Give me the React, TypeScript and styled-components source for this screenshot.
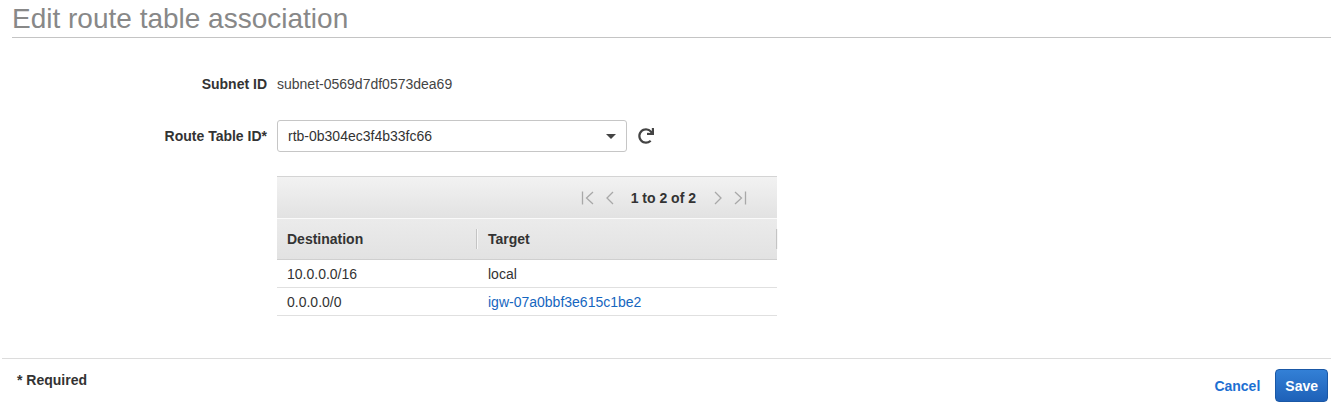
import styled, { createGlobalStyle } from 'styled-components'
import { FaRedo } from 'react-icons/fa'

const GlobalStyle = createGlobalStyle`
  body {
    margin: 0;
    font-family: "Liberation Sans", Arial, sans-serif;
    font-size: 14px;
    color: #444;
    background: #fff;
  }
`

const routes = [
  { destination: '10.0.0.0/16', target: 'local', link: false },
  { destination: '0.0.0.0/0', target: 'igw-07a0bbf3e615c1be2', link: true },
]

function PagerIcon({ kind }: { kind: 'first' | 'prev' | 'next' | 'last' }) {
  const flip = kind === 'next' || kind === 'last'
  const bar = kind === 'first' || kind === 'last'
  return (
    <svg width={bar ? 14 : 10} height="16" viewBox={bar ? '0 0 14 16' : '0 0 10 16'}>
      <g
        transform={flip ? `translate(${bar ? 14 : 10},0) scale(-1,1)` : undefined}
        fill="none"
        stroke="#a8a8a8"
        strokeWidth="1.3"
      >
        {bar && <line x1="1.5" y1="1.5" x2="1.5" y2="14.5" />}
        <polyline points={bar ? '12,2 5.5,8 12,14' : '8,2 2,8 8,14'} />
      </g>
    </svg>
  )
}

function App() {
  return (
    <>
      <GlobalStyle />
      <Page>
        <Title>Edit route table association</Title>
        <Form>
          <Label>Subnet ID</Label>
          <Value>subnet-0569d7df0573dea69</Value>

          <Label>Route Table ID*</Label>
          <SelectRow>
            <Select>
              <span>rtb-0b304ec3f4b33fc66</span>
              <Caret />
            </Select>
            <RefreshButton aria-label="Refresh">
              <FaRedo size={16} />
            </RefreshButton>
          </SelectRow>

          <span />
          <Table>
            <Pager>
              <PagerIcon kind="first" />
              <PagerIcon kind="prev" />
              <PagerText>1 to 2 of 2</PagerText>
              <PagerIcon kind="next" />
              <PagerIcon kind="last" />
            </Pager>
            <HeaderRow>
              <HeadCell>Destination</HeadCell>
              <HeadCell>Target</HeadCell>
            </HeaderRow>
            {routes.map((r) => (
              <Row key={r.destination}>
                <Cell>{r.destination}</Cell>
                <Cell>{r.link ? <Link>{r.target}</Link> : r.target}</Cell>
              </Row>
            ))}
          </Table>
        </Form>
        <Footer>
          <Required>* Required</Required>
          <Actions>
            <CancelButton>Cancel</CancelButton>
            <SaveButton>Save</SaveButton>
          </Actions>
        </Footer>
      </Page>
    </>
  )
}

export default App

const Page = styled.div`
  width: 1331px;
  height: 411px;
  overflow: hidden;
`

const Title = styled.h1`
  margin: 0 0 0 12px;
  padding: 2px 0 1px;
  font-size: 28px;
  line-height: 34px;
  font-weight: normal;
  color: #888;
  border-bottom: 1px solid #c4c4c4;
`

const Form = styled.div`
  display: grid;
  grid-template-columns: 267px 500px;
  column-gap: 10px;
  row-gap: 26px;
  padding-top: 36px;
  align-items: center;
`

const Label = styled.div`
  text-align: right;
  font-weight: bold;
  color: #333;
  line-height: 20px;
`

const Value = styled.div`
  line-height: 20px;
  color: #444;
`

const SelectRow = styled.div`
  display: flex;
  align-items: center;
  gap: 11px;
`

const Select = styled.div`
  box-sizing: border-box;
  width: 350px;
  height: 32px;
  display: flex;
  align-items: center;
  justify-content: space-between;
  padding: 0 10px;
  border: 1px solid #c6c6c6;
  border-radius: 3px;
  color: #333;
  background: #fff;
`

const Caret = styled.span`
  width: 0;
  height: 0;
  border-left: 5px solid transparent;
  border-right: 5px solid transparent;
  border-top: 5px solid #444;
`

const RefreshButton = styled.button`
  border: none;
  background: none;
  padding: 0;
  display: flex;
  color: #444;
  cursor: pointer;
`

const Table = styled.div`
  width: 500px;
  margin-top: -2px;
`

const Pager = styled.div`
  box-sizing: border-box;
  height: 43px;
  display: flex;
  align-items: center;
  justify-content: flex-end;
  gap: 10px;
  padding-right: 30px;
  border-top: 1px solid #d4d4d4;
  border-bottom: 1px solid #fafafa;
  background: linear-gradient(#f2f2f2, #e2e2e2);
`

const PagerText = styled.span`
  font-weight: bold;
  color: #333;
  margin: 0 7px 0 6px;
`

const HeaderRow = styled.div`
  display: grid;
  grid-template-columns: 200px 300px;
  height: 41px;
  box-sizing: border-box;
  border-bottom: 1px solid #cfcfcf;
  background: linear-gradient(#ebebeb, #e2e2e2);
`

const HeadCell = styled.div`
  display: flex;
  align-items: center;
  padding-left: 10px;
  font-weight: bold;
  color: #333;
  position: relative;

  &::after {
    content: '';
    position: absolute;
    right: 0;
    top: 10px;
    bottom: 10px;
    width: 1px;
    background: #c4c4c4;
    box-shadow: 1px 0 0 #f6f6f6;
  }

  & + & {
    padding-left: 11px;
  }
`

const Row = styled.div`
  display: grid;
  grid-template-columns: 200px 300px;
  height: 28px;
  box-sizing: border-box;
  border-bottom: 1px solid #e0e0e0;
`

const Cell = styled.div`
  display: flex;
  align-items: center;
  padding-left: 10px;
  color: #333;

  & + & {
    padding-left: 11px;
  }
`

const Link = styled.a`
  color: #1566c0;
  text-decoration: none;
`

const Footer = styled.div`
  margin: 42px 0 0 2px;
  border-top: 1px solid #dcdcdc;
  display: flex;
  justify-content: space-between;
  align-items: flex-start;
  padding: 9px 3px 0 15px;
`

const Required = styled.div`
  font-weight: bold;
  color: #333;
  line-height: 20px;
  margin-top: 2px;
`

const Actions = styled.div`
  display: flex;
  align-items: center;
  gap: 15px;
  margin-top: 1px;
`

const CancelButton = styled.button`
  border: none;
  background: none;
  padding: 0;
  font: bold 14px "Liberation Sans", Arial, sans-serif;
  color: #1d6fd2;
  cursor: pointer;
`

const SaveButton = styled.button`
  height: 33px;
  padding: 0 9px;
  border: 1px solid #1a58a6;
  border-radius: 4px;
  background: linear-gradient(#3380d6, #1e61b8);
  color: #fff;
  font: bold 14px "Liberation Sans", Arial, sans-serif;
  cursor: pointer;
`
